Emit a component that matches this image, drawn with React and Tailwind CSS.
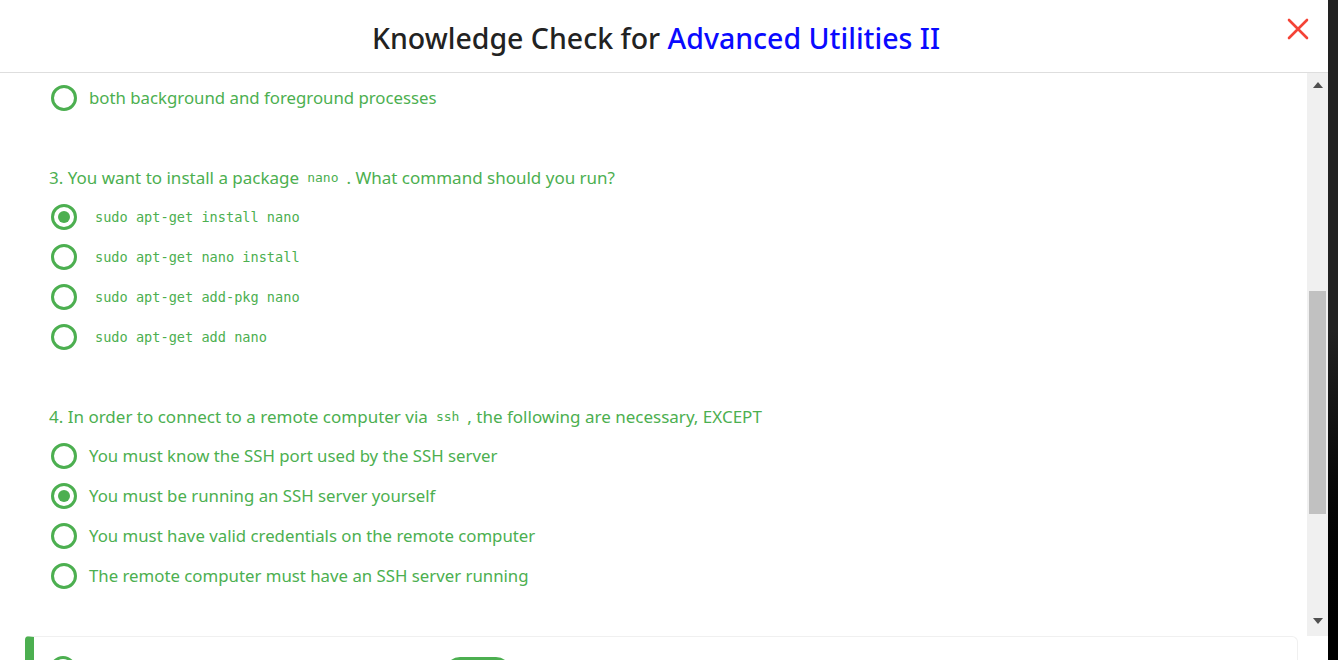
import React from "react";

const font = { fontFamily: '"Noto Sans", "Open Sans", sans-serif' };
const mono = { fontFamily: '"DejaVu Sans Mono", "Liberation Mono", monospace' };

function Radio({ checked }) {
  return (
    <span className="flex h-[26px] w-[26px] shrink-0 items-center justify-center rounded-full border-[3px] border-[#4caf50]">
      {checked && <span className="h-[12px] w-[12px] rounded-full bg-[#4caf50]" />}
    </span>
  );
}

function Option({ checked, children, code }) {
  return (
    <div className="flex h-[40px] items-center pl-[51px]">
      <Radio checked={checked} />
      {code ? (
        <span className="ml-[18px] text-[13.6px] text-[#4caf50]" style={mono}>{children}</span>
      ) : (
        <span className="ml-[12px] text-[16.8px] text-[#4caf50]" style={font}>{children}</span>
      )}
    </div>
  );
}

function Code({ children }) {
  return <span className="mx-[8px] text-[13px]" style={mono}>{children}</span>;
}

export default function App() {
  return (
    <div className="flex h-[660px] w-[1338px] overflow-hidden bg-[#1e1e1e]">
      <div className="flex h-full w-[1328px] flex-col bg-white">
        <div className="relative flex h-[73px] shrink-0 items-center justify-center border-b border-[#dedede] pr-[16px]">
          <h1 className="mt-[5px] text-[28.5px] font-medium text-[#222]" style={font}>
            Knowledge Check for <span className="text-[#0a0aff]">Advanced Utilities II</span>
          </h1>
          <svg className="absolute right-[19px] top-[18px]" width="22" height="22" viewBox="0 0 22 22">
            <path d="M2 2 L20 20 M20 2 L2 20" stroke="#f44336" strokeWidth="2.6" strokeLinecap="round" />
          </svg>
        </div>
        <div className="flex h-[563px] shrink-0">
          <div className="flex-1 overflow-hidden">
            <div className="pt-[5px]">
              <Option>both background and foreground processes</Option>
            </div>
            <div className="mt-[40px]">
              <div className="flex h-[39px] items-center pl-[49px] text-[17px] text-[#4caf50]" style={font}>
                3. You want to install a package <Code>nano</Code>. What command should you run?
              </div>
              <Option checked code>sudo apt-get install nano</Option>
              <Option code>sudo apt-get nano install</Option>
              <Option code>sudo apt-get add-pkg nano</Option>
              <Option code>sudo apt-get add nano</Option>
            </div>
            <div className="mt-[41px]">
              <div className="flex h-[38px] items-center pl-[49px] text-[17px] text-[#4caf50]" style={font}>
                4. In order to connect to a remote computer via <Code>ssh</Code>, the following are necessary, EXCEPT
              </div>
              <Option>You must know the SSH port used by the SSH server</Option>
              <Option checked>You must be running an SSH server yourself</Option>
              <Option>You must have valid credentials on the remote computer</Option>
              <Option>The remote computer must have an SSH server running</Option>
            </div>
          </div>
          <div className="flex w-[21px] flex-col items-center bg-[#f0f0f0]">
            <div className="flex h-[20px] w-full items-center justify-center pt-[4px]">
              <svg width="10" height="6" viewBox="0 0 10 6"><path d="M0 6 L5 0 L10 6 Z" fill="#505050" /></svg>
            </div>
            <div className="mt-[198px] h-[223px] w-[17px] bg-[#c1c1c1]" />
            <div className="flex-1" />
            <div className="flex h-[24px] w-full items-center justify-center pb-[6px]">
              <svg width="10" height="6" viewBox="0 0 10 6"><path d="M0 0 L10 0 L5 6 Z" fill="#505050" /></svg>
            </div>
          </div>
        </div>
        <div className="flex-1 pl-[25px] pr-[30px]">
          <div className="flex h-[40px] rounded-tl-[4px] rounded-tr-[6px] border-t border-r border-[#f0f0f0] border-l-[9px] border-l-[#4caf50]">
            <div className="ml-[16px] mt-[19px] h-[26px] w-[26px] rounded-full border-[3px] border-[#4caf50]" />
            <div className="ml-[369px] mt-[20px] h-[30px] w-[66px] rounded-full bg-[#4caf50]" />
          </div>
        </div>
      </div>
      <div className="h-full w-[10px] bg-gradient-to-b from-[#222] via-[#222] to-black" />
    </div>
  );
}
